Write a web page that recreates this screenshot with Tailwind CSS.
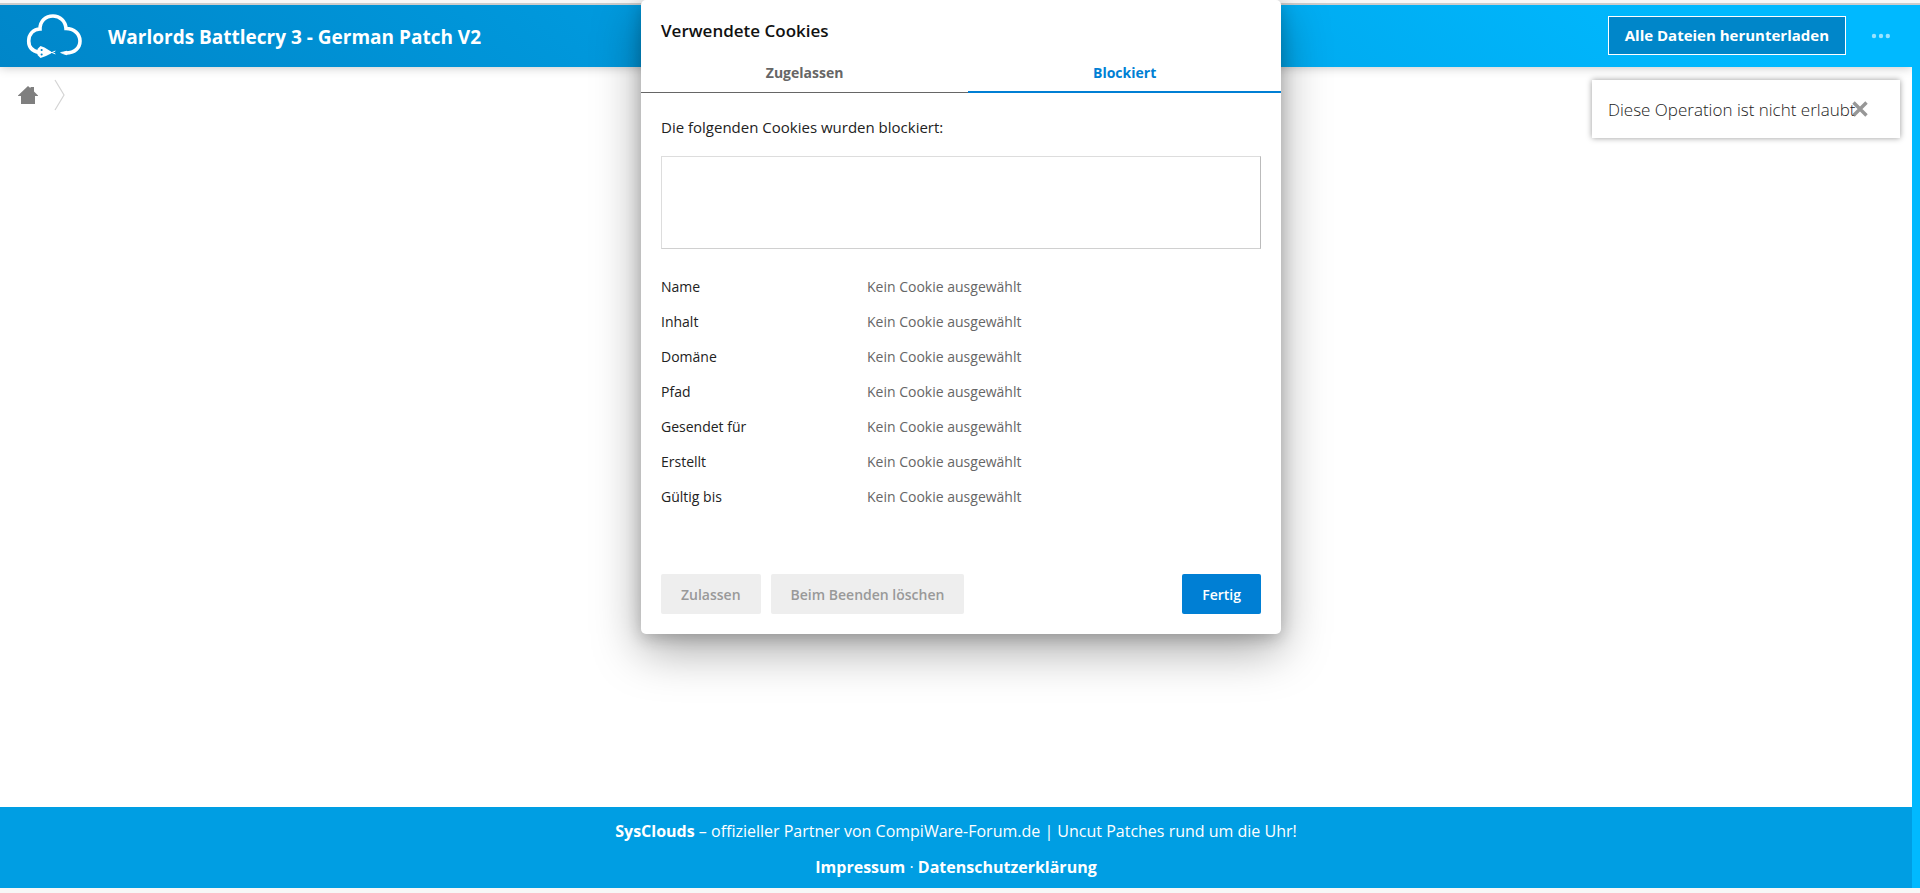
<!DOCTYPE html>
<html lang="de">
<head>
    <meta charset="UTF-8">
    <meta name="viewport" content="width=device-width, initial-scale=1.0">
    <title>Warlords Battlecry 3 - German Patch V2</title>
    <script src="https://cdn.jsdelivr.net/npm/@tailwindcss/browser@4"></script>
</head>
<body class="flex flex-col h-screen overflow-hidden bg-[#f7f7f7] font-['Open_Sans','Noto_Sans',sans-serif] text-[#222]">
    <div class="h-[5px] shrink-0 border-b-2 border-[#ccc]"></div>

    <div class="flex flex-1 bg-[#00b9ff]">
        <div class="flex flex-col flex-1 overflow-hidden bg-white">
            <!-- Header -->
            <header class="flex items-center h-[62px] shrink-0 pl-[26px] pr-[22px] text-white bg-linear-[40deg,#0086c9_0%,#00b9ff_90%] shadow-[0_0_10px_rgba(0,0,0,0.25)]">
                <a href="#" aria-label="SysClouds" class="shrink-0">
                    <svg class="w-14 h-11" viewBox="0 0 56 44" fill="none" stroke="#fff" stroke-width="3.6" stroke-linecap="round">
                        <path d="M13 38.500 C6 37 2.700 33 2.700 27 C2.700 20 7.500 15 14 15 C14 7 19.500 2 27 2 C34 2 39.500 7 40 14.500 C48 14.500 54 20 54 27 C54 34 48.500 39 40 39"/>
                        <path d="M35 38.500 L41 37.200 V40.800 L38 40 Z" fill="#fff" stroke-width="0.8"/>
                        <path d="M14.500 32 L18.500 33.500 L25 37.500 V39.500 L20 42 L14.500 44 L11.500 41 V35 Z" fill="#fff" stroke="none"/>
                        <path d="M23 38.500 H26 M26 38.500 L29 37.200 M26 38.500 L29 39.800" stroke-width="1"/>
                        <path d="M15.500 36 h.3 M15.500 40.500 h.3" stroke="#0086c9" stroke-width="1.800"/>
                    </svg>
                </a>
                <h1 class="flex-1 ml-[26px] pt-0.5 text-[19px] font-bold">Warlords Battlecry 3 - German Patch V2</h1>
                <button type="button" class="h-[39px] mb-0.5 px-4 border border-white bg-[#0086c9] text-[15px] font-bold">Alle Dateien herunterladen</button>
                <button type="button" aria-label="Mehr" class="ml-6 opacity-60">
                    <svg class="w-5 h-4" viewBox="0 0 20 16" fill="#fff">
                        <circle cx="4" cy="8" r="2.200"/>
                        <circle cx="11" cy="8" r="2.200"/>
                        <circle cx="17.800" cy="8" r="2.200"/>
                    </svg>
                </button>
            </header>

            <!-- Breadcrumb -->
            <main class="flex-1">
                <nav class="flex items-center h-14 pl-[18px]">
                    <a href="#" aria-label="Startseite">
                        <svg class="w-5 h-5" viewBox="0 0 20 20" fill="#7f7f7f">
                            <path d="M10 1 L12.500 3.300 V2 H16 V6.500 L20 10.500 V11 H17 V19 H3 V11 H0 V10.500 Z"/>
                        </svg>
                    </a>
                    <svg class="w-3 h-8 ml-4" viewBox="0 0 12 32" fill="none" stroke="#d4d4d4" stroke-width="1.200">
                        <path d="M1 1 L10 16 L1 31"/>
                    </svg>
                </nav>
            </main>

            <!-- Footer -->
            <footer class="shrink-0 pt-1.5 pb-[3px] bg-[#009ee3] text-center text-base leading-9 text-white">
                <p><a href="#" class="font-bold">SysClouds</a> – offizieller Partner von CompiWare-Forum.de | Uncut Patches rund um die Uhr!</p>
                <p><a href="#" class="font-bold">Impressum</a> · <a href="#" class="font-bold">Datenschutzerklärung</a></p>
            </footer>
        </div>
        <div class="w-2"></div>
    </div>
    <div class="h-[5px] shrink-0"></div>

    <!-- Notification -->
    <div role="alert" class="absolute top-20 right-5 flex items-center w-[308px] h-[58px] px-4 bg-white text-[17px] shadow-[0_0_6px_rgba(0,0,0,0.4)]">
        <span class="pt-0.5 font-light whitespace-nowrap">Diese Operation ist nicht erlaubt</span>
        <button type="button" aria-label="Schließen" class="absolute right-8 top-[21px] opacity-90">
            <svg class="w-4 h-4" viewBox="0 0 16 16" stroke="#8c8c8c" stroke-width="3.4">
                <path d="M1.500 1.500 L14.500 14.500 M14.500 1.500 L1.500 14.500"/>
            </svg>
        </button>
    </div>

    <!-- Cookie dialog -->
    <div role="dialog" aria-labelledby="dialogTitle" class="absolute top-0 left-0.5 right-0 mx-auto w-[640px] rounded-[5px] bg-white shadow-[0_16px_48px_rgba(0,0,0,0.35),0_4px_16px_rgba(0,0,0,0.2)]">
        <h2 id="dialogTitle" class="px-5 pt-[19px] pb-[7px] text-[17px] leading-6 font-semibold text-[#111]">Verwendete Cookies</h2>
        <div role="tablist" class="flex h-[43px] text-[14px] font-bold">
            <button type="button" role="tab" aria-selected="false" class="flex-auto pt-[3px] border-b border-[#666] text-[#666]">Zugelassen</button>
            <button type="button" role="tab" aria-selected="true" class="flex-auto pt-1 border-b-2 border-[#007fd4] text-[#007fd4]">Blockiert</button>
        </div>

        <div class="p-5">
            <p class="pb-[3px] text-[15px] leading-7">Die folgenden Cookies wurden blockiert:</p>
            <div role="listbox" aria-label="Blockierte Cookies" class="h-[93px] mt-3 border border-[#ddd] border-b-[#d0d0d0] border-r-[#bbb]"></div>

            <dl class="grid grid-cols-[206px_1fr] mt-5 text-[14px] leading-[35px]">
                <dt>Name</dt>
                <dd class="text-[#666]">Kein Cookie ausgewählt</dd>
                <dt>Inhalt</dt>
                <dd class="text-[#666]">Kein Cookie ausgewählt</dd>
                <dt>Domäne</dt>
                <dd class="text-[#666]">Kein Cookie ausgewählt</dd>
                <dt>Pfad</dt>
                <dd class="text-[#666]">Kein Cookie ausgewählt</dd>
                <dt>Gesendet für</dt>
                <dd class="text-[#666]">Kein Cookie ausgewählt</dd>
                <dt>Erstellt</dt>
                <dd class="text-[#666]">Kein Cookie ausgewählt</dd>
                <dt>Gültig bis</dt>
                <dd class="text-[#666]">Kein Cookie ausgewählt</dd>
            </dl>

            <div class="flex gap-2.5 mt-15 text-[14px] font-semibold">
                <button type="button" disabled class="h-10 px-5 rounded-xs bg-[#eee] text-[#999]">Zulassen</button>
                <button type="button" disabled class="h-10 px-5 rounded-xs bg-[#eee] text-[#999]">Beim Beenden löschen</button>
                <button type="button" class="h-10 ml-auto px-5 rounded-xs bg-[#007fd4] text-white">Fertig</button>
            </div>
        </div>
    </div>
</body>
</html>
